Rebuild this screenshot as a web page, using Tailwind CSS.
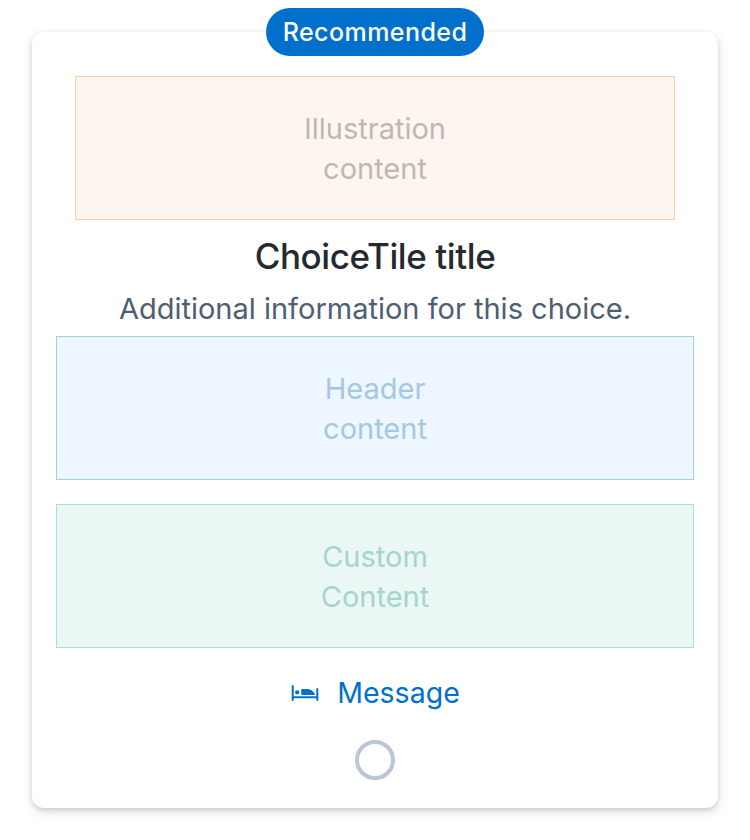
<!DOCTYPE html>
<html lang="en"><head><meta charset="utf-8"><title>ChoiceTile</title>
<script src="https://cdn.jsdelivr.net/npm/@tailwindcss/browser@4"></script></head>
<body class="bg-white font-['Inter',sans-serif]">
<main class="h-[840px] px-8 pt-8">
<section class="relative flex h-[776px] w-[686px] flex-col items-center rounded-xl bg-white px-6 pt-11 shadow-[0_2px_4px_rgba(37,42,49,0.16),0_4px_12px_rgba(37,42,49,0.12)]">
<div class="absolute -top-6 left-[234px] flex h-12 w-[218px] items-center justify-center rounded-full bg-[#0070cc] pt-0.5 text-[25px] font-medium tracking-[0.45px] text-white"><span class="whitespace-nowrap">Recommended</span></div>
<div class="flex h-36 w-[600px] shrink-0 items-center justify-center border border-[#f8d3a0] bg-[#fef5f0] pt-0.5 text-center text-[29px] leading-10 text-[#bdb8b3]"><span>Illustration<br>content</span></div>
<h1 class="mt-[15px] text-[35px] leading-[42px] font-medium tracking-[-0.4px] text-[#252a31]">ChoiceTile title</h1>
<p class="mt-3 h-[47px] text-[29px] leading-10 text-[#4f5e71]">Additional information for this choice.</p>
<div class="flex h-36 w-full shrink-0 items-center justify-center border border-[#9fcfee] bg-[#eef6ff] pt-0.5 text-center text-[29px] leading-10 text-[#a4c8e4]"><span>Header<br>content</span></div>
<div class="mt-6 flex h-36 w-full shrink-0 items-center justify-center border border-[#a5dfd5] bg-[#ebf7f5] pt-0.5 text-center text-[29px] leading-10 text-[#a5d5ca]"><span>Custom<br>Content</span></div>
<div class="mt-[25px] flex h-10 items-center gap-4 text-[28.5px] leading-10 text-[#0070c9]"><svg class="-ml-px size-8" viewBox="0 0 32 32" fill="currentColor"><path d="M2.700 9q0-1 1-1t1 1v10.300H27.300V12q0-1 1-1t1 1v11q0 1-1 1t-1-1v-1.700H4.700V23q0 1-1 1t-1-1z"/><circle cx="8.200" cy="15.400" r="2.100"/><path d="M12.300 12.500q0-.600.600-.600H19q3.200.300 5.800 3.400 1 1.100 1 2.600H12.900q-.600 0-.600-.600z"/></svg><span>Message</span></div>
<div class="mt-[27px] size-10 shrink-0 rounded-full border-4 border-[#bac7d5] bg-white"></div>
</section></main></body></html>
